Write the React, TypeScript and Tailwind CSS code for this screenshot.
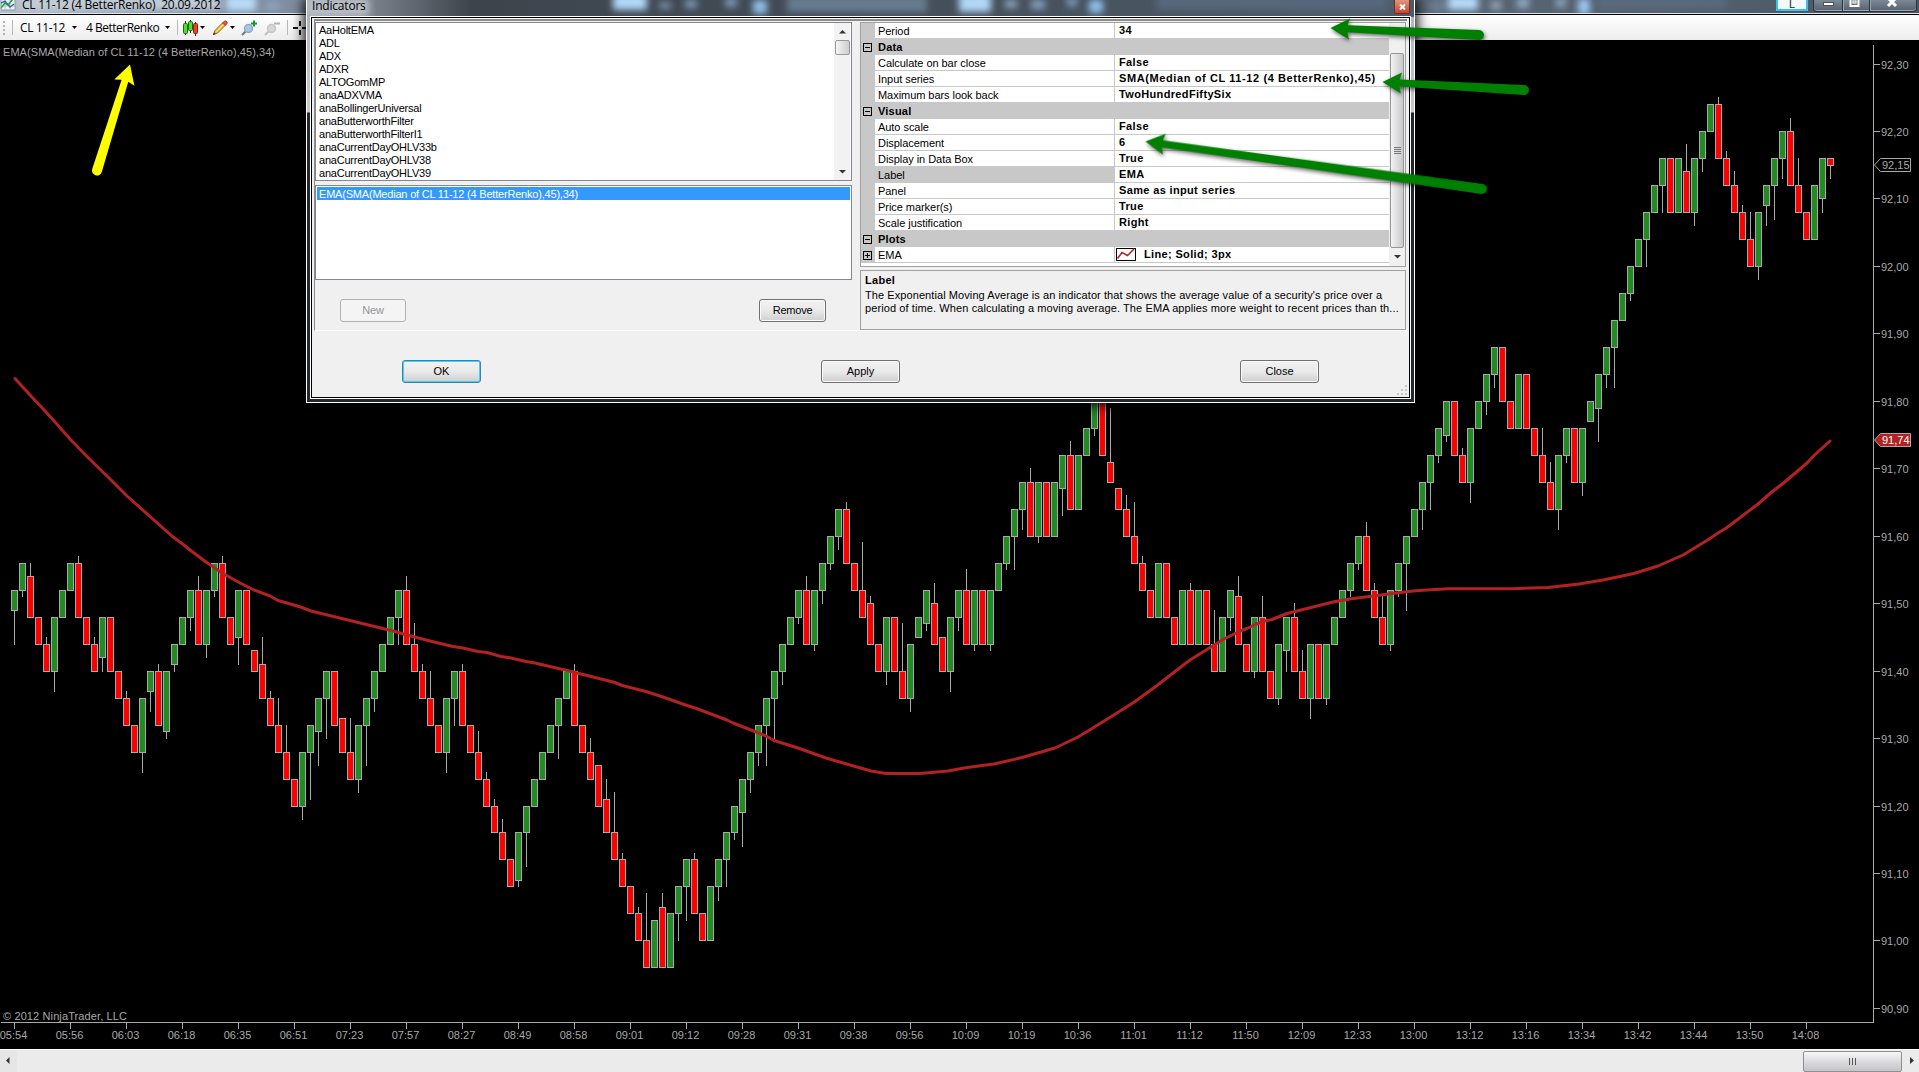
import type { ReactNode } from 'react';

// [open, close, wick end] in ticks above 90,00
type Bar = [number, number, number?];

const BARS: Bar[] = [
  [149, 152, 144], [152, 156, 151], [154, 148, 156], [148, 144], [144, 140, 145], [140, 148, 137], [148, 152], [152, 156],
  [156, 148, 157], [148, 144], [144, 140, 145], [142, 148, 140], [148, 140], [140, 136], [136, 132, 137], [132, 128],
  [128, 136, 125], [137, 140, 134], [140, 132, 141], [131, 140, 130], [141, 144, 140], [144, 148], [148, 152, 146], [152, 144, 154],
  [144, 152, 142], [152, 156, 151], [156, 148, 157], [148, 144], [145, 152, 141], [152, 144], [143, 140], [141, 136, 145],
  [136, 132, 137], [132, 128, 136], [128, 124, 132], [124, 120], [120, 128, 118], [128, 132, 121], [131, 136, 126], [136, 140, 130],
  [140, 132], [133, 128], [128, 124, 133], [124, 132, 122], [132, 136, 126], [136, 140, 134], [140, 144], [144, 148],
  [148, 152, 144], [152, 144, 154], [144, 140, 147], [140, 136, 141], [136, 132, 140], [132, 128], [128, 136, 125], [136, 140, 132],
  [140, 132, 141], [132, 128], [128, 124, 131], [124, 120, 125], [120, 116, 121], [116, 112, 118], [112, 108], [109, 116, 108],
  [116, 120, 111], [120, 124], [124, 128], [128, 132], [132, 136, 127], [136, 140], [140, 132, 141], [132, 128],
  [128, 124, 130], [126, 120], [121, 116, 124], [116, 112, 122], [112, 108, 113], [108, 104], [104, 100, 105], [100, 96, 107],
  [96, 103], [105, 96, 107], [96, 104], [104, 108, 100], [108, 112, 103], [112, 104, 113], [104, 100], [100, 108],
  [108, 112, 106], [112, 116, 108], [116, 120, 115], [119, 124, 114], [124, 128, 122], [128, 132, 126], [132, 136, 126], [136, 140, 130],
  [140, 144, 138], [144, 148], [148, 152, 147], [152, 144, 154], [144, 152, 143], [152, 156, 150], [156, 160, 155], [160, 164, 158],
  [164, 156, 165], [156, 152], [152, 148, 159], [150, 144, 151], [144, 140], [140, 148, 138], [148, 140], [140, 136, 147],
  [136, 144, 134], [145, 148], [147, 152, 146], [150, 144, 153], [145, 140], [140, 148, 137], [148, 152, 146], [152, 144, 155],
  [144, 152, 143], [152, 144], [144, 152, 143], [152, 156], [156, 160, 155], [160, 164, 155], [164, 168, 161], [168, 160, 170],
  [160, 168, 159], [168, 160], [160, 168], [167, 172, 163], [172, 164, 174], [164, 172], [172, 176], [176, 180, 175],
  [180, 172], [171, 168, 179], [167, 164], [164, 160, 166], [160, 156, 165], [156, 152, 157], [152, 148], [148, 156],
  [156, 148], [148, 144], [144, 152], [152, 144, 153], [144, 152], [152, 144], [144, 140, 149], [140, 148],
  [148, 152, 146], [151, 144, 154], [144, 140], [140, 148, 139], [148, 140, 151], [140, 136], [136, 144, 135], [143, 148, 140],
  [148, 140, 150], [140, 136, 143], [136, 144, 133], [144, 136], [136, 144, 135], [144, 148], [148, 152], [152, 156, 151],
  [156, 160, 155], [160, 152, 162], [152, 148, 153], [148, 144, 151], [144, 152, 143], [152, 156, 151], [156, 160, 149], [160, 164],
  [164, 168, 161], [168, 172, 164], [172, 176, 171], [175, 180, 174], [180, 172], [172, 168, 173], [168, 176, 165], [176, 180],
  [180, 184, 178], [184, 188, 182], [188, 180], [180, 176], [176, 184], [184, 176], [176, 172], [172, 168, 176],
  [168, 164, 171], [164, 172, 161], [172, 176, 171], [176, 168], [168, 176, 166], [177, 180], [179, 184, 174], [184, 188, 182],
  [188, 192, 182], [192, 196], [196, 200, 195], [200, 204], [204, 208, 200], [208, 212], [212, 216, 208], [216, 208],
  [208, 216], [214, 208, 218], [208, 216, 206], [216, 220, 214], [220, 224], [224, 216, 225], [216, 212, 217], [212, 208, 214],
  [208, 204, 209], [204, 200, 208], [200, 208, 198], [209, 212, 206], [212, 216, 207], [216, 220, 213], [220, 212, 222], [212, 208, 216],
  [208, 204], [204, 212], [210, 216, 208], [216, 215, 213],
];

const EMA_POINTS =
  '15,378.5 30,395 39,404.5 55,422 70,439 88,457.5 107,476 127,496 173,537 182,543.5 190,550 206,562 222,573 240,583 254,590 270,596 278,600.5 ' +
  '287,603 302,607.5 311,611 393,631 407,635 430,641 453,646.5 463,648 478,651.5 487,652.5 501,656.5 511,658 526,661.5 535,663 567,670.5 583,674.5 ' +
  '615,682.5 622,685.5 646,691.5 663,697 687,705.5 695,708 727,720 733,723 751,730 766,736 774,740.5 798,748 826,758 857,767 871,771 886,773.5 ' +
  '920,773.5 948,771 967,767.5 994,764 1022,757.5 1055,748 1077,737.5 1088,731 1117,713 1135,701.5 1157,685.5 1175,671.5 1190,660 1223,639.5 ' +
  '1238,632 1247,628.5 1255,624.5 1263,621.5 1272,619.5 1287,613.5 1333,602 1350,599 1373,596 1400,592.5 1413,591 1423,590.3 1448,588.7 ' +
  '1511,588.7 1548,587.5 1579,584 1603,580 1634,573.5 1658,566 1683,555 1706,541 1718,533 1727,527.5 1758,504 1773,491 1783,483.5 1807,463 ' +
  '1815,454.5 1830,441';

const TIMES = [
  '05:54', '05:56', '06:03', '06:18', '06:35', '06:51', '07:23', '07:57', '08:27', '08:49', '08:58',
  '09:01', '09:12', '09:28', '09:31', '09:38', '09:56', '10:09', '10:19', '10:36', '11:01', '11:12',
  '11:50', '12:09', '12:33', '13:00', '13:12', '13:16', '13:34', '13:42', '13:44', '13:50', '14:08',
];

const INDICATORS = [
  'AaHoltEMA', 'ADL', 'ADX', 'ADXR', 'ALTOGomMP', 'anaADXVMA', 'anaBollingerUniversal', 'anaButterworthFilter',
  'anaButterworthFilterI1', 'anaCurrentDayOHLV33b', 'anaCurrentDayOHLV38', 'anaCurrentDayOHLV39',
];

type Row = { name: string; value?: string; selected?: boolean };

const ROWS: Row[] = [
  { name: 'Period', value: '34' },
  { name: 'Data' },
  { name: 'Calculate on bar close', value: 'False' },
  { name: 'Input series', value: 'SMA(Median of CL 11-12 (4 BetterRenko),45)' },
  { name: 'Maximum bars look back', value: 'TwoHundredFiftySix' },
  { name: 'Visual' },
  { name: 'Auto scale', value: 'False' },
  { name: 'Displacement', value: '6' },
  { name: 'Display in Data Box', value: 'True' },
  { name: 'Label', value: 'EMA', selected: true },
  { name: 'Panel', value: 'Same as input series' },
  { name: 'Price marker(s)', value: 'True' },
  { name: 'Scale justification', value: 'Right' },
  { name: 'Plots' },
  { name: 'EMA', value: 'Line; Solid; 3px' },
];

const priceY = (ticks: number) => Math.floor(64.05 + (230 - ticks) * 6.745);
const priceLabel = (ticks: number) => (90 + ticks / 100).toFixed(2).replace('.', ',');

export default function App() {
  return (
    <div className="relative flex h-[1072px] w-[1919px] flex-col overflow-hidden bg-black font-['Liberation_Sans',Arial,sans-serif] text-[11px]">
      <TitleBar />
      <Toolbar />
      <Chart />
      <ScrollBar />
      <IndicatorsDialog />
      <Arrows />
    </div>
  );
}

function Glass({ spots }: { spots: [number, number, number, number, string][] }) {
  return (
    <svg className="absolute inset-0 h-full w-full">
      <defs>
        <filter id="soft" x="-50%" y="-100%" width="200%" height="300%">
          <feGaussianBlur stdDeviation="3.5" />
        </filter>
      </defs>
      {spots.map(([x, y, w, h, fill], i) => (
        <rect key={i} x={x} y={y} width={w} height={h} fill={fill} filter="url(#soft)" />
      ))}
    </svg>
  );
}

function TitleBar() {
  return (
    <div className="relative h-[15px] shrink-0 border-b border-black bg-linear-to-r from-[#b4bfcc] from-0% via-[#8291a3] via-10% to-[#4c5764]">
      <Glass
        spots={[
          [20, -4, 200, 14, '#c3cdd8'],
          [226, -4, 30, 15, '#b9dcf8'],
          [266, 2, 14, 8, '#8fa5bc'],
          [1430, 0, 16, 12, '#6b7e92'],
          [1448, -4, 30, 14, '#b5dcfa'],
          [1491, 2, 10, 7, '#9fb4c8'],
          [1517, -2, 12, 10, '#93acc8'],
          [1556, -2, 10, 9, '#8fa8c2'],
          [1578, -1, 12, 15, '#9bccf5'],
          [1596, -3, 130, 12, '#586a7c'],
        ]}
      />
      <div className="relative flex h-[14px] items-start justify-between border-b border-[#dfe5ec]">
        <div className="flex">
          <svg width="15" height="12" className="ml-px">
            <rect x="0" y="-4" width="14" height="14" fill="#eef2f7" stroke="#8b97a8" />
            <path d="M0 6h14M4 0v10M9 0v10" stroke="#b9c4d2" fill="none" />
            <path d="M0 8L4 3L7 5L12 -1" stroke="#28a428" strokeWidth="1.6" fill="none" />
            <path d="M0 3L4 1L9 7L13 4" stroke="#3464b8" strokeWidth="1.4" fill="none" />
          </svg>
          <span className="ml-[6px] font-['Open_Sans',sans-serif] text-[12px] leading-[9px] tracking-[-0.2px] whitespace-pre text-black">
            CL 11-12 (4 BetterRenko)  20.09.2012
          </span>
        </div>
        <div className="flex pr-[2px]">
          <div className="mr-[5px] flex h-[11px] w-[32px] justify-center border-x-2 border-b-2 border-[#35c3ee] bg-[#f3f9fd] text-[11px] leading-[8px] text-[#222]">
            L
          </div>
          <div className="flex h-[12px] rounded-b-[4px] border border-t-0 border-[#2c343d] bg-linear-to-b from-[#7d8995] to-[#566270] shadow-[inset_0_-1px_0_#98a4b0]">
            <svg width="102" height="11">
              <path d="M28.5 0V11M55.5 0V11" stroke="#2c343d" />
              <path d="M29.5 0V10M56.5 0V10" stroke="#98a4b0" />
              <rect x="9.500" y="2.500" width="10" height="3" fill="#fff" stroke="#4a535d" />
              <rect x="36.500" y="-2" width="8" height="8" fill="none" stroke="#fff" strokeWidth="2" />
              <rect x="39" y="1" width="3" height="2" fill="none" stroke="#fff" />
              <path d="M74 6L82 -2M74 -2L82 6" stroke="#fff" strokeWidth="3" />
            </svg>
          </div>
        </div>
      </div>
    </div>
  );
}

function Caret() {
  return (
    <svg width="5" height="3" className="shrink-0">
      <path d="M0 0H5L2.500 3Z" fill="#000" />
    </svg>
  );
}

function Toolbar() {
  return (
    <div className="flex h-[25px] shrink-0 items-center bg-linear-to-b from-white to-[#ededed] pl-[3px] font-['Open_Sans',sans-serif] text-[12px] text-black">
      <svg width="3" height="16">
        <path d="M1 1V16" stroke="#b5b5b5" strokeWidth="2" strokeDasharray="2 2" />
      </svg>
      <span className="ml-[6px] h-[15px] w-px bg-[#b8b8b8]" />
      <span className="ml-[7px] w-[46px] tracking-[-0.4px] whitespace-nowrap">CL 11-12</span>
      <span className="ml-[6px] flex"><Caret /></span>
      <span className="ml-[9px] w-[73px] tracking-[-0.5px] whitespace-nowrap">4 BetterRenko</span>
      <span className="ml-[6px] flex"><Caret /></span>
      <span className="ml-[7px] h-[15px] w-px bg-[#b8b8b8]" />
      <svg width="15" height="16" className="ml-[5px]">
        <path d="M2.500 1V15M7.500 0V13M12.500 2V16" stroke="#222" />
        <rect x="0.500" y="3.500" width="4" height="10" rx="1" fill="#57d92b" stroke="#1b6b12" />
        <rect x="5.500" y="1.500" width="4" height="9" rx="1" fill="#57d92b" stroke="#1b6b12" />
        <rect x="10.500" y="3.500" width="4" height="10" rx="1" fill="#f0402c" stroke="#8e1a10" />
      </svg>
      <span className="ml-[2px] flex"><Caret /></span>
      <svg width="16" height="16" className="ml-[7px]">
        <path d="M1.500 14.500L3 10.500L11.500 2L14 4.500L5.500 13Z" fill="#f8c53a" stroke="#8a6412" />
        <path d="M4.500 11.500L12.500 3.500" stroke="#fff0a8" />
        <path d="M10.500 3L12.500 1Q14 .5 15 2T14.500 4L13 5.500Z" fill="#e2564a" stroke="#a33129" strokeWidth=".8" />
        <path d="M1 15L2 12.500L3.500 14Z" fill="#222" />
      </svg>
      <span className="ml-[2px] flex"><Caret /></span>
      <svg width="18" height="16" className="ml-[6px]">
        <path d="M1 15L5 11" stroke="#6e7a84" strokeWidth="2" />
        <circle cx="7.500" cy="8.500" r="4" fill="#9ccbf0" stroke="#98a6b3" strokeWidth="1.4" />
        <path d="M10 3.500H16M13 .5V6.500" stroke="#159a2a" strokeWidth="2" />
      </svg>
      <svg width="18" height="16" className="ml-[5px]">
        <path d="M1 15L5 11" stroke="#c0c0c0" strokeWidth="2" />
        <circle cx="7.500" cy="8.500" r="4" fill="#d6d6d6" stroke="#c4c4c4" strokeWidth="1.4" />
        <path d="M10 3.500H16" stroke="#b2b2b2" strokeWidth="2" />
      </svg>
      <span className="ml-[5px] h-[15px] w-px bg-[#b8b8b8]" />
      <svg width="14" height="14" className="ml-[5px]">
        <path d="M7 0V5M7 9V14M0 7H5M9 7H14" stroke="#111" strokeWidth="2" />
      </svg>
    </div>
  );
}

function Chart() {
  const prices = Array.from({ length: 15 }, (_, i) => 230 - i * 10);
  return (
    <svg viewBox="0 40 1919 1009" className="h-[1009px] w-[1919px] shrink-0 bg-black" fill="#a9a9a9">
      <g shapeRendering="crispEdges">
        {BARS.map(([open, close, wick], i) => {
          const x = 14 + i * 8;
          const top = priceY(Math.max(open, close));
          const bottom = priceY(Math.min(open, close));
          const end = wick === undefined ? top : priceY(wick);
          return (
            <g key={i}>
              <rect x={x} y={Math.min(top, end)} width="1" height={Math.max(bottom, end) - Math.min(top, end) + 1} />
              <rect x={x - 3} y={top} width="7" height={bottom - top + 1} />
              <rect x={x - 2} y={top + 1} width="5" height={bottom - top - 1} fill={close > open ? '#228b22' : '#ff0000'} />
            </g>
          );
        })}
      </g>
      <polyline points={EMA_POINTS} fill="none" stroke="#b22222" strokeWidth="3" strokeLinejoin="round" strokeLinecap="round" />

      <text x="3" y="56" textLength="272">EMA(SMA(Median of CL 11-12 (4 BetterRenko),45),34)</text>
      <text x="3" y="1020" textLength="124">© 2012 NinjaTrader, LLC</text>

      <g shapeRendering="crispEdges">
        <rect x="1873" y="45" width="1" height="978" />
        <rect x="1" y="1022" width="1873" height="1" />
        {prices.map(p => <rect key={p} x="1874" y={priceY(p)} width="6" height="1" />)}
        {TIMES.map((t, i) => <rect key={t} x={14 + i * 56} y="1023" width="1" height="6" />)}
      </g>
      {prices.map(p => <text key={p} x="1881" y={priceY(p) + 5}>{priceLabel(p)}</text>)}
      {TIMES.map((t, i) => <text key={t} x={13.5 + i * 56} y="1039" textAnchor="middle">{t}</text>)}

      <path d="M1874.500 165L1880.500 158.500H1910.500V171.500H1880.500Z" fill="#000" stroke="#a9a9a9" />
      <text x="1882" y="169">92,15</text>
      <path d="M1874.500 440L1880.500 433.500H1910.500V446.500H1880.500Z" fill="#b22222" stroke="#a9a9a9" />
      <text x="1882" y="444" fill="#fff">91,74</text>
    </svg>
  );
}

function ScrollBar() {
  return (
    <div className="flex h-[23px] shrink-0 items-center border-t border-white bg-[#ebebeb] text-[#333]">
      <svg width="17" height="22" className="bg-[#e6e6e6]">
        <path d="M9.500 7V14L6 10.500Z" fill="#333" />
      </svg>
      <div className="flex-1" />
      <div className="flex h-[21px] w-[99px] items-center justify-center gap-[2px] rounded-[2px] border border-[#8f8f8f] bg-linear-to-b from-[#f6f6f6] via-[#dcdce0] to-[#c4c4c8]">
        {[0, 1, 2].map(i => <span key={i} className="h-[7px] w-px bg-[#555]" />)}
      </div>
      <svg width="17" height="22">
        <path d="M8 7V14L12 10.500Z" fill="#333" />
      </svg>
    </div>
  );
}

function Button({ children, className }: { children: ReactNode; className: string }) {
  return (
    <div className={'flex h-[23px] items-center justify-center rounded-[3px] border ' + className}>
      {children}
    </div>
  );
}

const NORMAL = 'border-[#707070] bg-linear-to-b from-[#f2f2f2] from-0% via-[#e9e9e9] via-50% to-[#cfcfcf] shadow-[inset_0_0_0_1px_#fafafa]';

function IndicatorsDialog() {
  return (
    <div className="absolute top-0 left-[306px] flex h-[403px] w-[1109px] flex-col border border-t-0 border-white bg-linear-to-b from-[#a9b4c0] from-0% via-[#c9c9c9] via-[112px] to-[#23282e] to-[113px] px-[3px] pb-[3px] text-black shadow-[0_0_12px_2px_#000]">
      <div className="absolute inset-x-0 top-0 h-[17px] bg-linear-to-r from-[#a4acb6] from-0% via-[#3d444c] via-15% to-[#4e5b6a]">
        <Glass
          spots={[
            [0, -2, 62, 18, '#b9bfc7'],
            [306, -6, 34, 16, '#b1d8f8'],
            [352, 2, 12, 7, '#7790ab'],
            [378, 0, 12, 8, '#7f9abb'],
            [418, -2, 12, 9, '#7f9abb'],
            [446, 0, 14, 14, '#8fbfe8'],
            [480, -4, 140, 16, '#667b90'],
            [652, -6, 32, 18, '#b1d8f8'],
            [698, 0, 12, 8, '#8ea6bd'],
            [724, 0, 14, 9, '#86a3c3'],
            [760, -2, 10, 8, '#86a3c3'],
            [782, 0, 14, 13, '#8fc2ee'],
            [850, -6, 230, 16, '#56687b'],
          ]}
        />
      </div>
      <div className="relative flex h-[16px] shrink-0 items-start justify-between">
        <span className="ml-[2px] font-['Open_Sans',sans-serif] text-[12px] leading-[12px] tracking-[-0.2px]">Indicators</span>
        <span className="mr-px flex h-[14px] w-[16px] items-center justify-center rounded-b-[2px] border border-t-0 border-[#7a2a20] bg-linear-to-b from-[#e0957f] to-[#c9422a]">
          <svg width="7" height="6">
            <path d="M1 .5L6 5.500M6 .5L1 5.500" stroke="#fff" strokeWidth="2" />
          </svg>
        </span>
      </div>
      <div className="relative flex min-h-0 flex-1 flex-col border border-white bg-black p-px">
        <div className="flex min-h-0 flex-1 flex-col border-t border-t-white bg-[#f0f0f0] px-[2px]">
          <div className="flex h-[312px] shrink-0 border-t-2 border-b border-l border-t-[#8c8c8c] border-b-white border-l-[#8c8c8c]">
            <LeftPane />
            <RightPane />
          </div>
          <div className="flex justify-between px-[88px] pt-[29px]">
            <Button className="w-[79px] border-[#3c7fb1] bg-linear-to-b from-[#f2f2f2] via-[#e9e9e9] to-[#cfcfcf] shadow-[inset_0_0_0_1px_#47d0f2]">OK</Button>
            <Button className={'w-[79px] ' + NORMAL}>Apply</Button>
            <Button className={'w-[79px] ' + NORMAL}>Close</Button>
          </div>
        </div>
        <svg width="10" height="10" className="absolute right-[3px] bottom-[3px]" fill="#c4c4c4">
          <path d="M8 0h2v2h-2zM4 4h2v2h-2zM8 4h2v2h-2zM0 8h2v2h-2zM4 8h2v2h-2zM8 8h2v2h-2z" />
        </svg>
      </div>
    </div>
  );
}

function LeftPane() {
  return (
    <div className="flex w-[537px] flex-col pt-px tracking-[-0.22px]">
      <div className="flex h-[159px] justify-between border border-[#828790] bg-white px-px">
        <div className="flex flex-col pl-[2px]">
          {INDICATORS.map(name => <span key={name} className="h-[13px] leading-[15px]">{name}</span>)}
        </div>
        <div className="flex w-[16px] flex-col items-center bg-[#f2f2f2]">
          <svg width="7" height="17"><path d="M0 10.500H7L3.500 7Z" fill="#333" /></svg>
          <div className="h-[15px] w-[15px] rounded-[2px] border border-[#979797] bg-linear-to-r from-[#f5f5f5] to-[#cdcdcd]" />
          <div className="flex-1" />
          <svg width="7" height="17"><path d="M0 7H7L3.500 10.500Z" fill="#333" /></svg>
        </div>
      </div>
      <div className="mt-[4px] h-[95px] border border-[#828790] bg-white p-px">
        <div className="h-[13px] bg-[#3399ff] pl-[2px] leading-[14px] tracking-[-0.2px] text-white">EMA(SMA(Median of CL 11-12 (4 BetterRenko),45),34)</div>
      </div>
      <div className="flex justify-between pt-[19px] pr-[26px] pl-[25px]">
        <Button className="w-[66px] border-[#adb2b5] bg-[#f4f4f4] text-[#939393]">New</Button>
        <Button className={'w-[67px] ' + NORMAL}>Remove</Button>
      </div>
    </div>
  );
}

function Toggle({ plus }: { plus?: boolean }) {
  return (
    <svg width="9" height="9" fill="none" stroke="#000">
      <rect x=".5" y=".5" width="8" height="8" />
      <path d={plus ? 'M2 4.500H7M4.500 2V7' : 'M2 4.500H7'} />
    </svg>
  );
}

function PropertyRow({ name, value, selected }: Row) {
  if (!value) {
    return (
      <div className="flex h-[16px] items-center bg-[#c8c8c8] pl-[2px] font-bold tracking-[0.2px]">
        <Toggle />
        <span className="ml-[6px]">{name}</span>
      </div>
    );
  }
  const plot = value.startsWith('Line');
  return (
    <div className="flex h-[16px]">
      <div className="flex w-[14px] items-center bg-[#c8c8c8] pl-[2px]">{plot && <Toggle plus />}</div>
      <div className={'w-[240px] border-r border-b border-[#c8c8c8] pl-[3px] leading-[16px] tracking-[-0.05px] ' + (selected ? 'bg-[#c8c8c8]' : '')}>{name}</div>
      <div
        className={
          'flex flex-1 items-center border-b border-[#c8c8c8] pl-[4px] font-bold whitespace-nowrap ' +
          (value.length > 40 ? 'tracking-[0.6px]' : 'tracking-[0.35px]')
        }
      >
        {plot && (
          <svg width="20" height="13" className="mr-[8px] -ml-[3px]">
            <rect x=".5" y=".5" width="19" height="12" fill="#fff" stroke="#000" />
            <path d="M1.500 10.500L6 4.500L11.500 7.500L18 1" fill="none" stroke="#b22222" strokeWidth="1.5" />
          </svg>
        )}
        {value}
      </div>
    </div>
  );
}

function RightPane() {
  return (
    <div className="ml-[8px] flex w-[546px] flex-col pt-px">
      <div className="flex h-[245px] border border-[#a0a0a0] bg-white">
        <div className="w-[528px]">
          {ROWS.map((row, i) => <PropertyRow key={i} {...row} />)}
        </div>
        <div className="flex w-[16px] flex-col items-center bg-[#f0f0f0]">
          <div className="mt-[30px] flex h-[195px] w-[14px] flex-col items-center justify-center gap-px rounded-[2px] border border-[#979797] bg-linear-to-r from-[#f3f3f3] to-[#c9c9cc]">
            {[0, 1, 2, 3].map(i => <span key={i} className="h-px w-[7px] bg-[#777]" />)}
          </div>
          <svg width="7" height="16"><path d="M0 7H7L3.500 10.500Z" fill="#333" /></svg>
        </div>
      </div>
      <div className="mt-[3px] h-[60px] border border-[#a0a0a0] pl-[4px] leading-[13px] whitespace-nowrap">
        <div className="mt-[3px] mb-[2px] font-bold tracking-[0.3px]">Label</div>
        <div className="tracking-[0.08px]">The Exponential Moving Average is an indicator that shows the average value of a security's price over a</div>
        <div className="tracking-[0.1px]">period of time. When calculating a moving average. The EMA applies more weight to recent prices than th...</div>
      </div>
    </div>
  );
}

function Arrow({ x, y, tailX, tailY, fill }: { x: number; y: number; tailX: number; tailY: number; fill: string }) {
  const len = Math.hypot(tailX - x, tailY - y);
  const angle = (Math.atan2(tailY - y, tailX - x) * 180) / Math.PI;
  return (
    <path
      transform={`translate(${x} ${y}) rotate(${angle})`}
      d={`M0 0L19 -10.500L17 -3.500L${len} -5A5 5 0 0 1 ${len} 5L17 3.500L19 10.500Z`}
      fill={fill}
    />
  );
}

function Arrows() {
  return (
    <svg className="pointer-events-none absolute inset-0 h-full w-full">
      <Arrow x={130} y={64.5} tailX={97} tailY={170.5} fill="#ffff00" />
      <g className="drop-shadow-[1px_2px_2px_rgba(0,0,0,0.6)]">
        <Arrow x={1330.5} y={28} tailX={1479} tailY={35} fill="#008000" />
        <Arrow x={1382.5} y={82} tailX={1524} tailY={90} fill="#008000" />
        <Arrow x={1145.5} y={141.5} tailX={1482} tailY={189} fill="#008000" />
      </g>
    </svg>
  );
}
